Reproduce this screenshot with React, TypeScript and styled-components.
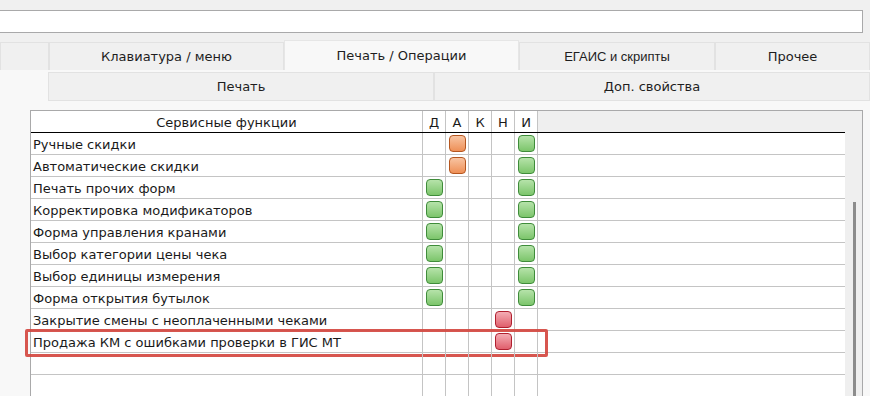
import React from 'react';
import styled, { createGlobalStyle, css } from 'styled-components';

const GlobalStyle = createGlobalStyle`
  html, body {
    margin: 0;
    padding: 0;
    background: #f0f0f0;
    font-family: "DejaVu Sans", Verdana, sans-serif;
    color: #1a1a1a;
    overflow: hidden;
  }
`;

const Page = styled.div`
  width: 870px;
  height: 396px;
  display: flex;
  flex-direction: column;
  overflow: hidden;
`;

const SearchBar = styled.div`
  padding: 10px 7px 0 0;
  height: 23px;
  flex: none;
`;

const SearchInput = styled.div`
  height: 21px;
  background: #fff;
  border: 1px solid #a9a9aa;
  border-left: none;
`;

const TabRow = styled.div<{ $cols: string }>`
  display: grid;
  grid-template-columns: ${p => p.$cols};
  height: 30px;
  margin-top: 7px;
  flex: none;
  align-items: end;
`;

const SubTabRow = styled.div<{ $cols: string }>`
  display: grid;
  grid-template-columns: ${p => p.$cols};
  height: 29px;
  padding-top: 2px;
  flex: none;
  background: #f8f8f8;
`;

const Tab = styled.div<{ $active?: boolean; $arial?: boolean }>`
  display: flex;
  align-items: center;
  justify-content: center;
  background: #f0f0f0;
  border: 1px solid #e2e2e2;
  font-size: 13px;
  color: #1e1e1e;
  box-sizing: border-box;
  height: 30px;
  padding-bottom: 1px;
  ${p => p.$arial && css`
    font-family: "Liberation Sans", Arial, sans-serif;
  `}
  ${p => p.$active && css`
    background: #f8f8f8;
    height: 34px;
    margin-bottom: -2px;
    border-bottom: none;
    border-color: #e6e6e6;
    padding-bottom: 5px;
  `}
`;

const SubTab = styled.div<{ $blank?: boolean }>`
  display: flex;
  align-items: center;
  justify-content: center;
  font-size: 13px;
  color: #1e1e1e;
  background: #f0f0f0;
  border: 1px solid #e2e2e2;
  box-sizing: border-box;
  ${p => p.$blank && css`
    background: #f8f8f8;
    border: none;
  `}
`;

const Content = styled.div`
  flex: 1;
  background: #f8f8f8;
  padding: 9px 7px 0 30px;
  display: flex;
  min-height: 0;
`;

const Frame = styled.div`
  flex: 1;
  display: flex;
  border: 1px solid #a9a9aa;
  border-bottom: none;
  background: #fff;
`;

const Grid = styled.div`
  flex: 1;
  display: flex;
  flex-direction: column;
`;

const COLS = '392px repeat(5, 23px) 1fr';

const HeaderRow = styled.div`
  display: grid;
  grid-template-columns: ${COLS};
  height: 22px;
  box-sizing: border-box;
  border-bottom: 1px solid #000;
  flex: none;
`;

const HeadCell = styled.div<{ $filler?: boolean }>`
  display: flex;
  align-items: center;
  justify-content: center;
  font-size: 13px;
  padding-top: 1px;
  border-right: 1px solid #c4c4c4;
  background: #fff;
  ${p => p.$filler && css`
    background: #efefef;
    border-right: none;
  `}
`;

const Row = styled.div`
  position: relative;
  display: grid;
  grid-template-columns: ${COLS};
  height: 22px;
  box-sizing: border-box;
  border-bottom: 1px solid #c4c4c4;
  flex: none;
`;

const NameCell = styled.div`
  display: flex;
  align-items: center;
  padding: 2px 0 0 2px;
  font-size: 13px;
  white-space: nowrap;
  border-right: 1px solid #c4c4c4;
`;

const FlagCell = styled.div`
  display: flex;
  align-items: center;
  justify-content: center;
  border-right: 1px solid #c4c4c4;
`;

const badgeColors = {
  green: { border: '#3f8c3a', top: '#b6e3aa', bottom: '#7cc56b' },
  orange: { border: '#b5561f', top: '#f8c4a2', bottom: '#ee9057' },
  red: { border: '#b0202f', top: '#f4adb4', bottom: '#e05f6c' },
};

type BadgeKind = keyof typeof badgeColors;

const Badge = styled.div<{ $kind: BadgeKind }>`
  width: 17px;
  height: 17px;
  box-sizing: border-box;
  border-radius: 4px;
  border: 1px solid ${p => badgeColors[p.$kind].border};
  background: linear-gradient(${p => badgeColors[p.$kind].top}, ${p => badgeColors[p.$kind].bottom});
`;

const Highlight = styled.div`
  position: absolute;
  left: -6px;
  top: -2px;
  width: 523px;
  height: 28px;
  box-sizing: border-box;
  border: 3px solid rgba(212, 72, 64, 0.92);
  border-radius: 2px;
  pointer-events: none;
`;

const Scroll = styled.div`
  width: 17px;
  background: #efefef;
  display: flex;
  flex-direction: column;
  align-items: center;
  padding-top: 91px;
`;

const Thumb = styled.div`
  width: 3px;
  margin-left: 2px;
  flex: 1;
  background: #8c8c8c;
`;

type Flags = [BadgeKind?, BadgeKind?, BadgeKind?, BadgeKind?, BadgeKind?];

const rows: { name: string; flags: Flags; marked?: boolean }[] = [
  { name: 'Ручные скидки', flags: [undefined, 'orange', undefined, undefined, 'green'] },
  { name: 'Автоматические скидки', flags: [undefined, 'orange', undefined, undefined, 'green'] },
  { name: 'Печать прочих форм', flags: ['green', undefined, undefined, undefined, 'green'] },
  { name: 'Корректировка модификаторов', flags: ['green', undefined, undefined, undefined, 'green'] },
  { name: 'Форма управления кранами', flags: ['green', undefined, undefined, undefined, 'green'] },
  { name: 'Выбор категории цены чека', flags: ['green', undefined, undefined, undefined, 'green'] },
  { name: 'Выбор единицы измерения', flags: ['green', undefined, undefined, undefined, 'green'] },
  { name: 'Форма открытия бутылок', flags: ['green', undefined, undefined, undefined, 'green'] },
  { name: 'Закрытие смены с неоплаченными чеками', flags: [undefined, undefined, undefined, 'red', undefined] },
  { name: 'Продажа КМ с ошибками проверки в ГИС МТ', flags: [undefined, undefined, undefined, 'red', undefined], marked: true },
  { name: '', flags: [] },
  { name: '', flags: [] },
];

const letters = ['Д', 'А', 'К', 'Н', 'И'];

export default function App() {
  return (
    <Page>
      <GlobalStyle />
      <SearchBar><SearchInput /></SearchBar>
      <TabRow $cols="49px 235px 235px 196px 1fr">
        <Tab />
        <Tab>Клавиатура / меню</Tab>
        <Tab $active>Печать / Операции</Tab>
        <Tab $arial>ЕГАИС и скрипты</Tab>
        <Tab>Прочее</Tab>
      </TabRow>
      <SubTabRow $cols="48px 386px 1fr">
        <SubTab $blank />
        <SubTab>Печать</SubTab>
        <SubTab>Доп. свойства</SubTab>
      </SubTabRow>
      <Content>
        <Frame>
          <Grid>
            <HeaderRow>
              <HeadCell>Сервисные функции</HeadCell>
              {letters.map(l => <HeadCell key={l}>{l}</HeadCell>)}
              <HeadCell $filler />
            </HeaderRow>
            {rows.map((r, i) => (
              <Row key={i}>
                <NameCell>{r.name}</NameCell>
                {[0, 1, 2, 3, 4].map(c => (
                  <FlagCell key={c}>{r.flags[c] && <Badge $kind={r.flags[c]!} />}</FlagCell>
                ))}
                <div />
                {r.marked && <Highlight />}
              </Row>
            ))}
          </Grid>
          <Scroll><Thumb /></Scroll>
        </Frame>
      </Content>
    </Page>
  );
}
